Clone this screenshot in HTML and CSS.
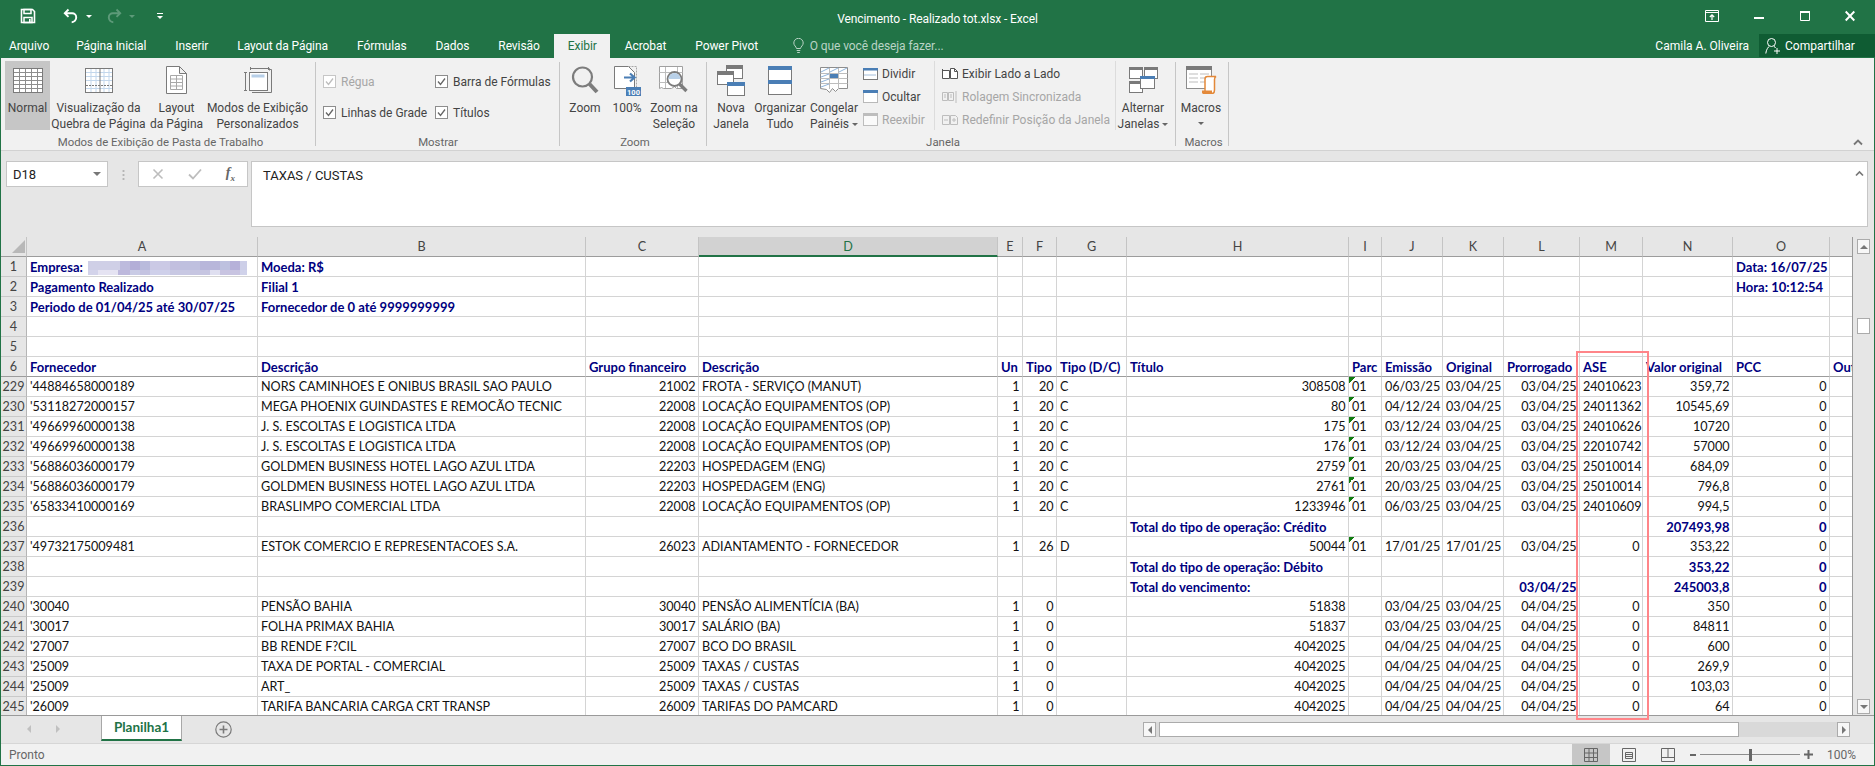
FILE: index.html
```html
<!DOCTYPE html>
<html lang="pt-BR">
<head>
<meta charset="utf-8">
<title>Vencimento - Realizado tot.xlsx - Excel</title>
<link rel="stylesheet" href="styles.css">
</head>
<body>
<div class="app">

  <header class="titlebar">
    <div class="qat">
      <svg class="q-save" width="16" height="16" viewBox="0 0 16 16"><path d="M1.5 1.5h11l2 2v11h-13z" fill="none" stroke="#fff" stroke-width="1.6"/><path d="M4 1.5h7v4H4zM4 9.5h8v5H4z" fill="none" stroke="#fff" stroke-width="1.5"/><rect x="9" y="11" width="1.6" height="3" fill="#fff"/></svg>
      <svg class="q-undo" width="16" height="16" viewBox="0 0 16 16"><path d="M5.5 1.5 1.8 5.2l3.7 3.7M2.2 5.2h7a4 4 0 0 1 4 4 4.600 4.600 0 0 1-4.500 5" fill="none" stroke="#fff" stroke-width="1.9"/></svg>
      <span class="q-caret"></span>
      <svg class="q-redo" width="16" height="16" viewBox="0 0 16 16"><path d="M10.500 1.500l3.700 3.700-3.700 3.700M13.800 5.200h-7a4 4 0 0 0-4 4 4.600 4.600 0 0 0 4.500 5" fill="none" stroke="#5d9a79" stroke-width="1.900"/></svg>
      <span class="q-caret dim"></span>
      <span class="q-custom"></span>
    </div>
    <div class="doc-title">Vencimento - Realizado tot.xlsx - Excel</div>
    <div class="winctl">
      <svg width="14" height="12" viewBox="0 0 14 12"><path d="M.5.500h13v11H.5zM.5 2.500h13" fill="none" stroke="#fff"/><path d="M7 10V5M4.800 7 7 4.800 9.200 7" fill="none" stroke="#fff" stroke-width="1.200"/></svg>
      <svg width="10" height="12" viewBox="0 0 10 12"><rect y="7" width="10" height="2" fill="#fff"/></svg>
      <svg width="10" height="12" viewBox="0 0 10 12"><path d="M.5 1.500h9v9h-9z" fill="none" stroke="#fff"/><rect y="1" width="10" height="2" fill="#fff"/></svg>
      <svg width="10" height="12" viewBox="0 0 10 12"><path d="M.7 1.500l8.600 9M9.300 1.500l-8.600 9" stroke="#fff" stroke-width="1.900"/></svg>
    </div>
  </header>

  <nav class="tabs">
    <span class="tab first">Arquivo</span>
    <span class="tab">Página Inicial</span>
    <span class="tab">Inserir</span>
    <span class="tab">Layout da Página</span>
    <span class="tab">Fórmulas</span>
    <span class="tab">Dados</span>
    <span class="tab">Revisão</span>
    <span class="tab active">Exibir</span>
    <span class="tab">Acrobat</span>
    <span class="tab">Power Pivot</span>
    <span class="tell">
      <svg width="11" height="16" viewBox="0 0 11 16"><path d="M3.500 10.500C3.200 8.500.8 7.500.8 5a4.700 4.700 0 0 1 9.400 0c0 2.500-2.400 3.500-2.700 5.500zM3.700 12.500h3.600M4.200 14.500h2.600" fill="none" stroke="#b9d3c5"/></svg>
      O que você deseja fazer...
    </span>
    <span class="user">Camila A. Oliveira</span>
    <span class="share">
      <svg width="16" height="18" viewBox="0 0 16 18"><circle cx="6.500" cy="5.500" r="4" fill="none" stroke="#fff"/><path d="M.8 16.500c.4-4 2.400-6.500 3.700-7.500M8.800 9c.7.500 1.300 1.200 1.700 2M12 11v6M9 14h6" fill="none" stroke="#fff"/></svg>
      Compartilhar
    </span>
  </nav>

  <section class="ribbon">
    <div class="group g-views">
      <div class="g-body">
        <div class="big selected w-normal">
          <div class="ico"><svg width="30" height="25" viewBox="0 0 30 25"><rect x=".5" y=".5" width="29" height="24" fill="#fff" stroke="#7a7a7a"/><path d="M6.500 1v23M12.500 1v23M18.500 1v23M24.500 1v23M1 4.500h28M1 8.500h28M1 12.500h28M1 16.500h28M1 20.500h28" stroke="#8d8d8d"/></svg></div>
          <div class="lbl">Normal</div>
        </div>
        <div class="big w-quebra">
          <div class="ico"><svg width="28" height="25" viewBox="0 0 28 25"><rect x=".5" y=".5" width="27" height="24" fill="#fff" stroke="#7a7a7a"/><path d="M6 1v23M11 1v23M19 1v23M24 1v23M1 4.500h26M1 8.500h26M1 12.500h26M1 20.500h26" stroke="#c3d7ec"/><path d="M15 1v23" stroke="#7a7a7a"/><path d="M1 17.500h26" stroke="#7a7a7a" stroke-dasharray="2 1"/></svg></div>
          <div class="lbl">Visualização da<br>Quebra de Página</div>
        </div>
        <div class="big w-layout">
          <div class="ico"><svg width="21" height="28" viewBox="0 0 21 28"><path d="M.5.500h13l7 7v20H.500zM13.500.500v7h7" fill="#fff" stroke="#7a7a7a"/><path d="M4.500 9.500h12v14h-12zM4.500 13h12M4.500 16.500h12M4.500 20h12M10.500 10v13" fill="none" stroke="#a8a8a8"/></svg></div>
          <div class="lbl">Layout<br>da Página</div>
        </div>
        <div class="big w-modos">
          <div class="ico"><svg width="28" height="26" viewBox="0 0 28 26"><path d="M6.500 1.500h19v2M1.500 5.500v18M0 5.500h3M0 23.500h3M6.500 0v3M24.500 0v3M8 25.500h19.500V2.500H25" fill="none" stroke="#7a7a7a"/><rect x="5.500" y="5.500" width="18" height="18" fill="#fff" stroke="#7a7a7a"/><rect x="7.500" y="7.500" width="13" height="3" fill="#b7cfe8"/></svg></div>
          <div class="lbl">Modos de Exibição<br>Personalizados</div>
        </div>
      </div>
      <div class="g-label">Modos de Exibição de Pasta de Trabalho</div>
    </div>

    <div class="group g-show">
      <div class="g-body checks">
        <label class="chk off"><span class="box"><svg width="13" height="13" viewBox="0 0 13 13"><path d="M3 6.500 5.500 9.500 10 3.500" fill="none" stroke="#bdbdbd" stroke-width="1.300"/></svg></span>Régua</label>
        <label class="chk"><span class="box"><svg width="13" height="13" viewBox="0 0 13 13"><path d="M3 6.500 5.500 9.500 10 3.500" fill="none" stroke="#666" stroke-width="1.300"/></svg></span>Barra de Fórmulas</label>
        <label class="chk"><span class="box"><svg width="13" height="13" viewBox="0 0 13 13"><path d="M3 6.500 5.500 9.500 10 3.500" fill="none" stroke="#666" stroke-width="1.300"/></svg></span>Linhas de Grade</label>
        <label class="chk"><span class="box"><svg width="13" height="13" viewBox="0 0 13 13"><path d="M3 6.500 5.500 9.500 10 3.500" fill="none" stroke="#666" stroke-width="1.300"/></svg></span>Títulos</label>
      </div>
      <div class="g-label">Mostrar</div>
    </div>

    <div class="group g-zoom">
      <div class="g-body">
        <div class="big w-zoom">
          <div class="ico"><svg width="28" height="28" viewBox="0 0 28 28"><circle cx="11.500" cy="11" r="9.500" fill="none" stroke="#7c7c7c" stroke-width="2.200"/><path d="M18.500 18l7.500 8" stroke="#7c7c7c" stroke-width="4"/></svg></div>
          <div class="lbl">Zoom</div>
        </div>
        <div class="big w-100">
          <div class="ico"><svg width="27" height="31" viewBox="0 0 27 31"><path d="M.5 1.500h14l6 6v16H.5z" fill="#fff" stroke="#7a7a7a"/><path d="M14.500 1.500h8v22" fill="none" stroke="#a8a8a8" stroke-dasharray="2 1"/><path d="M10 12.500h10M16 8.500l4.500 4-4.500 4" fill="none" stroke="#4a7eb5" stroke-width="2.200"/><rect x="12" y="22" width="15" height="9" fill="#4a7eb5"/><text x="19.500" y="29.500" class="hundred">100</text></svg></div>
          <div class="lbl">100%</div>
        </div>
        <div class="big w-sel">
          <div class="ico"><svg width="30" height="28" viewBox="0 0 30 28"><path d="M.5.500h23v22h-6l-2-2-3 2h-8l-2-1-2 1z" fill="#fff" stroke="#a0a0a0"/><path d="M.5 6.500h23M.5 16.500h23M6.500 1v21M18.500 1v21" stroke="#bdbdbd"/><circle cx="15.500" cy="13" r="7" fill="#fff" stroke="#7c7c7c" stroke-width="1.800"/><path d="M9.500 13a6 6 0 0 1 12 0z" fill="#b8d0e8"/><path d="M20.500 18l7 7" stroke="#7c7c7c" stroke-width="3.400"/></svg></div>
          <div class="lbl">Zoom na<br>Seleção</div>
        </div>
      </div>
      <div class="g-label">Zoom</div>
    </div>

    <div class="group g-win">
      <div class="g-body">
        <div class="big w-nova">
          <div class="ico"><svg width="28" height="31" viewBox="0 0 28 31"><rect x="9.500" y=".5" width="16" height="13" fill="#fff" stroke="#7a7a7a"/><rect x="9" width="17" height="4" fill="#7a7a7a"/><rect x=".5" y="6.500" width="16" height="13" fill="#fff" stroke="#7a7a7a"/><rect y="6" width="17" height="4" fill="#7a7a7a"/><rect x="10.500" y="17.500" width="17" height="13" fill="#fff" stroke="#7a7a7a"/><rect x="10" y="17" width="18" height="4" fill="#4a7eb5"/></svg></div>
          <div class="lbl">Nova<br>Janela</div>
        </div>
        <div class="big w-org">
          <div class="ico"><svg width="24" height="29" viewBox="0 0 24 29"><rect x=".5" y=".5" width="23" height="28" fill="#fff" stroke="#7a7a7a"/><rect width="24" height="4" fill="#4a7eb5"/><rect y="14" width="24" height="4" fill="#4a7eb5"/></svg></div>
          <div class="lbl">Organizar<br>Tudo</div>
        </div>
        <div class="big w-cong">
          <div class="ico"><svg width="28" height="27" viewBox="0 0 28 27"><path d="M.5.500h27v21h-9l-3 3-3-3-3 4-3-3-6-1z" fill="#fff" stroke="#8d8d8d"/><path d="M.5 6.500h27M.5 11.500h27M.5 16.500h27M9.500 1v21M18.500 1v21" stroke="#bdbdbd"/><path d="M1 5 9 1M10 5l8-4M1 10l8-3M1 15l8-3M1 20l8-3M19 5l8-4" stroke="#8fb4da"/><rect x="10" y="7" width="8" height="4" fill="#4a7eb5"/></svg></div>
          <div class="lbl">Congelar<br>Painéis<i class="caret"></i></div>
        </div>
        <div class="smalls w-s1">
          <div class="sm"><svg width="15" height="12" viewBox="0 0 15 12"><rect x=".5" y=".5" width="14" height="11" fill="#fff" stroke="#7a7a7a"/><rect width="15" height="2.500" fill="#4a7eb5"/><path d="M1.500 7h12" stroke="#4a7eb5" stroke-dasharray="1 1"/></svg>Dividir</div>
          <div class="sm"><svg width="15" height="13" viewBox="0 0 15 13"><rect x=".5" y=".5" width="14" height="12" fill="#fff" stroke="#7a7a7a" stroke-dasharray="1 1"/><rect width="15" height="3" fill="#4a7eb5"/></svg>Ocultar</div>
          <div class="sm off"><svg width="15" height="13" viewBox="0 0 15 13"><rect x=".5" y=".5" width="14" height="12" fill="#fafafa" stroke="#bdbdbd"/><rect width="15" height="3" fill="#bdbdbd"/></svg>Reexibir</div>
        </div>
        <div class="smalls w-s2">
          <div class="sm"><svg width="16" height="11" viewBox="0 0 16 11"><path d="M.5 2.500h7v8h-7zM8.500 10.500h7v-7l-3-3h-4z" fill="#fff" stroke="#555"/><path d="M.5 1v2M12.500.5v3h3" fill="none" stroke="#555"/></svg>Exibir Lado a Lado</div>
          <div class="sm off"><svg width="16" height="14" viewBox="0 0 16 14"><path d="M.5 2.500h5v8h-5zM6.500 10.500h5v-8h-5z" fill="none" stroke="#bdbdbd"/><path d="M2 5h2M2 7h2M8 5h2M8 7h2M14 1v12" stroke="#bdbdbd"/></svg>Rolagem Sincronizada</div>
          <div class="sm off"><svg width="16" height="11" viewBox="0 0 16 11"><path d="M.5 1.500h7v9h-7zM8.500 10.500h7v-7l-2-2h-5z" fill="none" stroke="#bdbdbd"/><path d="M2 6h4M10 6h4M12 4v4" stroke="#bdbdbd"/></svg>Redefinir Posição da Janela</div>
        </div>
        <div class="big w-alt">
          <div class="ico"><svg width="29" height="26" viewBox="0 0 29 26"><rect x=".5" y=".5" width="13" height="11" fill="#fff" stroke="#7a7a7a"/><rect width="14" height="3" fill="#7a7a7a"/><rect x="15.500" y=".5" width="13" height="11" fill="#fff" stroke="#7a7a7a"/><rect x="15" width="14" height="3" fill="#7a7a7a"/><rect x=".5" y="14.500" width="13" height="11" fill="#fff" stroke="#7a7a7a"/><rect y="14" width="14" height="3" fill="#7a7a7a"/><rect x="11.500" y="9.500" width="14" height="12" fill="#fff" stroke="#7a7a7a"/><rect x="11" y="9" width="15" height="3" fill="#4a7eb5"/></svg></div>
          <div class="lbl">Alternar<br>Janelas<i class="caret"></i></div>
        </div>
      </div>
      <div class="g-label">Janela</div>
    </div>

    <div class="group g-mac">
      <div class="g-body">
        <div class="big w-mac">
          <div class="ico"><svg width="31" height="28" viewBox="0 0 31 28"><rect x=".5" y=".5" width="25" height="22" fill="#fff" stroke="#8d8d8d"/><rect width="26" height="4" fill="#7a7a7a"/><path d="M3 8h9M14 8h9M3 12h9M14 12h6M3 16h9M14 16h5" stroke="#bdbdbd"/><path d="M19 25V13c0-1.500 1-2.500 2.500-2.500H30c-1 .5-1.500 1.500-1.500 3V24c0 2-1 3.500-2.500 3.500h-9c1.500 0 2-1.500 2-2.500z" fill="#fff" stroke="#e3893a" stroke-width="1.500"/><path d="M16 26h10" stroke="#e3893a" stroke-width="3"/></svg></div>
          <div class="lbl">Macros<br><i class="caret solo"></i></div>
        </div>
      </div>
      <div class="g-label">Macros</div>
    </div>
    <svg class="collapse" width="10" height="8" viewBox="0 0 10 8"><path d="M1 6.500 5 2.500l4 4" fill="none" stroke="#777" stroke-width="1.800"/></svg>
  </section>

  <section class="formula">
    <div class="namebox">D18<i class="caret grey"></i></div>
    <div class="grip"></div>
    <div class="fbtns">
      <svg width="12" height="12" viewBox="0 0 12 12"><path d="M1.500 1.500l9 9M10.500 1.500l-9 9" stroke="#bdbdbd" stroke-width="1.600"/></svg>
      <svg width="14" height="12" viewBox="0 0 14 12"><path d="M1 6.500l4 4 8-9" fill="none" stroke="#bdbdbd" stroke-width="1.800"/></svg>
      <span class="fx">f<sub>x</sub></span>
    </div>
    <div class="fbar">TAXAS / CUSTAS
      <svg class="fb-up" width="9" height="7" viewBox="0 0 9 7"><path d="M1 5.500l3.500-3.500L8 5.500" fill="none" stroke="#777" stroke-width="1.700"/></svg>
    </div>
  </section>

  <section class="sheet">
    <div class="gridview">
      <table class="grid">
        <colgroup>
          <col class="c-rh"><col class="c-a"><col class="c-b"><col class="c-c"><col class="c-d"><col class="c-e"><col class="c-f"><col class="c-g"><col class="c-h"><col class="c-i"><col class="c-j"><col class="c-k"><col class="c-l"><col class="c-m"><col class="c-n"><col class="c-o"><col class="c-p">
        </colgroup>
        <thead>
          <tr><th class="corner"><svg width="13" height="13" viewBox="0 0 13 13"><path d="M13 0v13H0z" fill="#b8b8b8"/></svg></th><th>A</th><th>B</th><th>C</th><th class="cur">D</th><th>E</th><th>F</th><th>G</th><th>H</th><th>I</th><th>J</th><th>K</th><th>L</th><th>M</th><th>N</th><th>O</th><th></th></tr>
        </thead>
        <tbody>
          <tr class="hd"><th>1</th><td><span>Empresa:</span><span class="blur"></span></td><td>Moeda: R$</td><td></td><td></td><td></td><td></td><td></td><td></td><td></td><td></td><td></td><td></td><td></td><td></td><td>Data: 16/07/25</td><td></td></tr>
          <tr class="hd"><th>2</th><td>Pagamento Realizado</td><td>Filial 1</td><td></td><td></td><td></td><td></td><td></td><td></td><td></td><td></td><td></td><td></td><td></td><td></td><td>Hora: 10:12:54</td><td></td></tr>
          <tr class="hd"><th>3</th><td>Periodo de 01/04/25 até 30/07/25</td><td>Fornecedor de 0 até 9999999999</td><td></td><td></td><td></td><td></td><td></td><td></td><td></td><td></td><td></td><td></td><td></td><td></td><td></td><td></td></tr>
          <tr><th>4</th><td></td><td></td><td></td><td></td><td></td><td></td><td></td><td></td><td></td><td></td><td></td><td></td><td></td><td></td><td></td><td></td></tr>
          <tr><th>5</th><td></td><td></td><td></td><td></td><td></td><td></td><td></td><td></td><td></td><td></td><td></td><td></td><td></td><td></td><td></td><td></td></tr>
          <tr class="hd frozen"><th>6</th><td>Fornecedor</td><td>Descrição</td><td>Grupo financeiro</td><td>Descrição</td><td>Un</td><td>Tipo</td><td>Tipo (D/C)</td><td>Título</td><td>Parc</td><td>Emissão</td><td>Original</td><td>Prorrogado</td><td>ASE</td><td>Valor original</td><td>PCC</td><td>Out</td></tr>
          <tr><th>229</th><td>'44884658000189</td><td>NORS CAMINHOES E ONIBUS BRASIL SAO PAULO</td><td class="r">21002</td><td>FROTA - SERVIÇO (MANUT)</td><td class="r">1</td><td class="r">20</td><td>C</td><td class="r">308508</td><td class="t">01</td><td class="r">06/03/25</td><td class="r">03/04/25</td><td class="r">03/04/25</td><td class="r m">24010623</td><td class="r">359,72</td><td class="r">0</td><td></td></tr>
          <tr><th>230</th><td>'53118272000157</td><td>MEGA PHOENIX GUINDASTES E REMOCÃO TECNIC</td><td class="r">22008</td><td>LOCAÇÃO EQUIPAMENTOS (OP)</td><td class="r">1</td><td class="r">20</td><td>C</td><td class="r">80</td><td class="t">01</td><td class="r">04/12/24</td><td class="r">03/04/25</td><td class="r">03/04/25</td><td class="r m">24011362</td><td class="r">10545,69</td><td class="r">0</td><td></td></tr>
          <tr><th>231</th><td>'49669960000138</td><td>J. S. ESCOLTAS E LOGISTICA LTDA</td><td class="r">22008</td><td>LOCAÇÃO EQUIPAMENTOS (OP)</td><td class="r">1</td><td class="r">20</td><td>C</td><td class="r">175</td><td class="t">01</td><td class="r">03/12/24</td><td class="r">03/04/25</td><td class="r">03/04/25</td><td class="r m">24010626</td><td class="r">10720</td><td class="r">0</td><td></td></tr>
          <tr><th>232</th><td>'49669960000138</td><td>J. S. ESCOLTAS E LOGISTICA LTDA</td><td class="r">22008</td><td>LOCAÇÃO EQUIPAMENTOS (OP)</td><td class="r">1</td><td class="r">20</td><td>C</td><td class="r">176</td><td class="t">01</td><td class="r">03/12/24</td><td class="r">03/04/25</td><td class="r">03/04/25</td><td class="r m">22010742</td><td class="r">57000</td><td class="r">0</td><td></td></tr>
          <tr><th>233</th><td>'56886036000179</td><td>GOLDMEN BUSINESS HOTEL LAGO AZUL LTDA</td><td class="r">22203</td><td>HOSPEDAGEM (ENG)</td><td class="r">1</td><td class="r">20</td><td>C</td><td class="r">2759</td><td class="t">01</td><td class="r">20/03/25</td><td class="r">03/04/25</td><td class="r">03/04/25</td><td class="r m">25010014</td><td class="r">684,09</td><td class="r">0</td><td></td></tr>
          <tr><th>234</th><td>'56886036000179</td><td>GOLDMEN BUSINESS HOTEL LAGO AZUL LTDA</td><td class="r">22203</td><td>HOSPEDAGEM (ENG)</td><td class="r">1</td><td class="r">20</td><td>C</td><td class="r">2761</td><td class="t">01</td><td class="r">20/03/25</td><td class="r">03/04/25</td><td class="r">03/04/25</td><td class="r m">25010014</td><td class="r">796,8</td><td class="r">0</td><td></td></tr>
          <tr><th>235</th><td>'65833410000169</td><td>BRASLIMPO COMERCIAL LTDA</td><td class="r">22008</td><td>LOCAÇÃO EQUIPAMENTOS (OP)</td><td class="r">1</td><td class="r">20</td><td>C</td><td class="r">1233946</td><td class="t">01</td><td class="r">06/03/25</td><td class="r">03/04/25</td><td class="r">03/04/25</td><td class="r m">24010609</td><td class="r">994,5</td><td class="r">0</td><td></td></tr>
          <tr class="hd"><th>236</th><td></td><td></td><td></td><td></td><td></td><td></td><td></td><td>Total do tipo de operação: Crédito</td><td></td><td></td><td></td><td></td><td></td><td class="r">207493,98</td><td class="r">0</td><td></td></tr>
          <tr><th>237</th><td>'49732175009481</td><td>ESTOK COMERCIO E REPRESENTACOES S.A.</td><td class="r">26023</td><td>ADIANTAMENTO - FORNECEDOR</td><td class="r">1</td><td class="r">26</td><td>D</td><td class="r">50044</td><td class="t">01</td><td class="r">17/01/25</td><td class="r">17/01/25</td><td class="r">03/04/25</td><td class="r m">0</td><td class="r">353,22</td><td class="r">0</td><td></td></tr>
          <tr class="hd"><th>238</th><td></td><td></td><td></td><td></td><td></td><td></td><td></td><td>Total do tipo de operação: Débito</td><td></td><td></td><td></td><td></td><td></td><td class="r">353,22</td><td class="r">0</td><td></td></tr>
          <tr class="hd"><th>239</th><td></td><td></td><td></td><td></td><td></td><td></td><td></td><td>Total do vencimento:</td><td></td><td></td><td></td><td class="r">03/04/25</td><td></td><td class="r">245003,8</td><td class="r">0</td><td></td></tr>
          <tr><th>240</th><td>'30040</td><td>PENSÃO BAHIA</td><td class="r">30040</td><td>PENSÃO ALIMENTÍCIA (BA)</td><td class="r">1</td><td class="r">0</td><td></td><td class="r">51838</td><td></td><td class="r">03/04/25</td><td class="r">03/04/25</td><td class="r">04/04/25</td><td class="r m">0</td><td class="r">350</td><td class="r">0</td><td></td></tr>
          <tr><th>241</th><td>'30017</td><td>FOLHA PRIMAX BAHIA</td><td class="r">30017</td><td>SALÁRIO (BA)</td><td class="r">1</td><td class="r">0</td><td></td><td class="r">51837</td><td></td><td class="r">03/04/25</td><td class="r">03/04/25</td><td class="r">04/04/25</td><td class="r m">0</td><td class="r">84811</td><td class="r">0</td><td></td></tr>
          <tr><th>242</th><td>'27007</td><td>BB RENDE F?CIL</td><td class="r">27007</td><td>BCO DO BRASIL</td><td class="r">1</td><td class="r">0</td><td></td><td class="r">4042025</td><td></td><td class="r">04/04/25</td><td class="r">04/04/25</td><td class="r">04/04/25</td><td class="r m">0</td><td class="r">600</td><td class="r">0</td><td></td></tr>
          <tr><th>243</th><td>'25009</td><td>TAXA DE PORTAL - COMERCIAL</td><td class="r">25009</td><td>TAXAS / CUSTAS</td><td class="r">1</td><td class="r">0</td><td></td><td class="r">4042025</td><td></td><td class="r">04/04/25</td><td class="r">04/04/25</td><td class="r">04/04/25</td><td class="r m">0</td><td class="r">269,9</td><td class="r">0</td><td></td></tr>
          <tr><th>244</th><td>'25009</td><td>ART_</td><td class="r">25009</td><td>TAXAS / CUSTAS</td><td class="r">1</td><td class="r">0</td><td></td><td class="r">4042025</td><td></td><td class="r">04/04/25</td><td class="r">04/04/25</td><td class="r">04/04/25</td><td class="r m">0</td><td class="r">103,03</td><td class="r">0</td><td></td></tr>
          <tr><th>245</th><td>'26009</td><td>TARIFA BANCARIA CARGA CRT TRANSP</td><td class="r">26009</td><td>TARIFAS DO PAMCARD</td><td class="r">1</td><td class="r">0</td><td></td><td class="r">4042025</td><td></td><td class="r">04/04/25</td><td class="r">04/04/25</td><td class="r">04/04/25</td><td class="r m">0</td><td class="r">64</td><td class="r">0</td><td></td></tr>
        </tbody>
      </table>
    </div>
    <div class="vscroll">
      <span class="sb-btn"><i class="tri up"></i></span>
      <span class="sb-thumb"></span>
      <span class="sb-btn down"><i class="tri dn"></i></span>
    </div>
    <div class="redbox"></div>
  </section>

  <section class="tabstrip">
    <div class="sheetnav"><i class="tri lf pale"></i><i class="tri rt pale"></i></div>
    <div class="sheettab">Planilha1</div>
    <svg class="addsheet" width="17" height="17" viewBox="0 0 17 17"><circle cx="8.500" cy="8.500" r="7.700" fill="none" stroke="#7a7a7a" stroke-width="1.200"/><path d="M8.500 4.500v8M4.500 8.500h8" stroke="#7a7a7a" stroke-width="1.600"/></svg>
    <div class="hscroll">
      <span class="sb-btn"><i class="tri lf"></i></span>
      <span class="h-thumb"></span>
      <span class="sb-btn"><i class="tri rt"></i></span>
    </div>
  </section>

  <footer class="status">
    <span class="ready">Pronto</span>
    <div class="views">
      <span class="vbtn on"><svg width="14" height="14" viewBox="0 0 14 14"><path d="M.5.500h13v13H.5zM5 1v12M9.500 1v12M1 5h12M1 9.500h12" fill="none" stroke="#666"/></svg></span>
      <span class="vbtn"><svg width="14" height="14" viewBox="0 0 14 14"><path d="M.5.500h13v13H.5zM3.500 4.500h7v6h-7zM3.500 6.500h7M3.500 8.500h7" fill="none" stroke="#666"/></svg></span>
      <span class="vbtn"><svg width="14" height="14" viewBox="0 0 14 14"><path d="M.5.500h13v13H.5zM.5 9.500h13M7 1v8" fill="none" stroke="#666"/></svg></span>
    </div>
    <div class="zoomctl">
      <i class="zminus"></i>
      <div class="slider"><i class="knob"></i></div>
      <svg width="9" height="9" viewBox="0 0 9 9"><path d="M4.500 0v9M0 4.500h9" stroke="#666" stroke-width="2"/></svg>
    </div>
    <span class="pct">100%</span>
  </footer>
</div>
</body>
</html>
```
FILE: styles.css
```css
* { box-sizing: border-box; }
html, body { margin: 0; padding: 0; }
body { width: 1875px; height: 766px; overflow: hidden; font-family: Roboto, "Open Sans", sans-serif; font-size: 12px; color: #444; }
i { font-style: normal; display: inline-block; }
svg { display: block; flex: none; }

.app { width: 1875px; height: 766px; display: flex; flex-direction: column; border-left: 1px solid #217346; border-right: 1px solid #217346; border-bottom: 1px solid #217346; background: #e6e6e6; }

/* title bar */
.titlebar { height: 34px; flex: none; background: #217346; color: #fff; display: grid; grid-template-columns: 1fr 400px 1fr; align-items: center; margin-left: -1px; margin-right: -1px; }
.qat { display: flex; align-items: center; padding-left: 20px; height: 32px; align-self: start; }
.q-undo { margin-left: 27px; }
.q-redo { margin-left: 14px; }
.q-caret { width: 0; height: 0; border: 3px solid transparent; border-top: 3px solid #fff; margin: 3px 0 0 7px; }
.q-caret.dim { border-top-color: #5d9a79; }
.q-custom { width: 6px; height: 6px; margin-left: 22px; border-top: 1px solid #fff; position: relative; }
.q-custom::after { content: ""; display: block; width: 0; height: 0; border: 3px solid transparent; border-top-color: #fff; margin-top: 2px; }
.doc-title { text-align: center; font-size: 12px; letter-spacing: -.1px; padding-top: 3px; }
.winctl { display: flex; justify-content: flex-end; align-items: center; height: 32px; padding-right: 20px; gap: 35.500px; align-self: start; }

/* tabs */
.tabs { height: 24px; flex: none; background: #217346; display: flex; align-items: stretch; color: #fff; margin-left: -1px; margin-right: -1px; letter-spacing: -.08px; }
.tab { padding: 5px 14.500px 0; }
.tab.first { padding-left: 9px; padding-right: 12.500px; }
.tab.active { background: #f1f1f1; color: #217346; padding: 5px 13.500px 0; }
.tell { display: flex; align-items: center; gap: 6px; margin-left: 20px; color: #b9d3c5; }
.user { margin-left: auto; padding: 5px 10px 0 0; letter-spacing: 0; }
.share { width: 116px; margin-bottom: 1px; background: #0f5c33; display: flex; align-items: center; padding-left: 6px; gap: 4px; letter-spacing: 0; }

/* ribbon */
.ribbon { height: 93px; flex: none; background: #f1f1f1; border-bottom: 1px solid #d2d2d2; display: flex; position: relative; padding-left: 1px; }
.group { display: flex; flex-direction: column; align-items: stretch; padding-top: 3px; position: relative; }
.group::after { content: ""; position: absolute; right: 0; top: 4px; bottom: 4px; width: 1px; background: #c6c6c6; }
.g-body { height: 73px; display: flex; }
.g-label { height: 16px; line-height: 16px; text-align: center; color: #666; font-size: 11.400px; }
.g-views { width: 314px; padding-left: 3px; }
.g-show { width: 244px; }
.g-zoom { width: 147px; padding-left: 3px; }
.g-win { width: 469px; padding-left: 3px; }
.g-mac { width: 53px; padding-left: 2px; }
.big { height: 69px; display: flex; flex-direction: column; align-items: center; }
.big.selected { background: #c6c6c6; }
.ico { height: 38px; margin-bottom: 1px; flex: none; display: flex; align-items: center; justify-content: center; }
.lbl { line-height: 16px; text-align: center; white-space: nowrap; }
.w-normal { width: 45px; }
.w-quebra { width: 97px; }
.w-layout { width: 59px; }
.w-modos { width: 103px; }
.w-zoom { width: 44px; }
.w-100 { width: 40px; }
.w-sel { width: 54px; }
.w-nova { width: 42px; }
.w-org { width: 56px; }
.w-cong { width: 52px; }
.w-alt { width: 54px; }
.w-mac { width: 46px; }
.smalls { display: flex; flex-direction: column; height: 69px; padding-top: 1px; }
.w-s1 { width: 75px; padding-left: 3px; border-right: 1px solid #dcdcdc; }
.w-s2 { width: 181px; padding-left: 7px; border-right: 1px solid #dcdcdc; }
.sm { height: 23px; flex: none; display: flex; align-items: center; gap: 4px; white-space: nowrap; }
.sm.off { color: #a6a6a6; }
.checks { display: grid; grid-template-columns: 112px 1fr; grid-auto-rows: 31px; padding: 5px 0 0 7px; }
.chk { display: flex; align-items: center; gap: 5px; white-space: nowrap; }
.chk.off { color: #a6a6a6; }
.box { width: 13px; height: 13px; background: #fff; border: 1px solid #8d8d8d; display: block; }
.chk.off .box { border-color: #c6c6c6; }
.box svg { margin: -1px; }
.hundred { font: 700 7.500px Roboto, sans-serif; fill: #fff; text-anchor: middle; }
.caret { width: 0; height: 0; border: 3px solid transparent; border-top-color: #666; margin-left: 3px; vertical-align: -1px; }
.caret.solo { margin-left: 0; vertical-align: 0; }
.collapse { position: absolute; right: 11px; top: 80px; }

/* formula row */
.formula { height: 86px; flex: none; background: #e6e6e6; display: flex; align-items: flex-start; padding-top: 10px; }
.namebox { width: 102px; height: 26px; margin-left: 5px; background: #fff; border: 1px solid #c6c6c6; display: flex; align-items: center; justify-content: space-between; padding: 0 6px; font: 13px Roboto, sans-serif; color: #222; }
.caret.grey { border-top-color: #777; border-width: 4px; margin-top: 4px; }
.grip { width: 30px; height: 12px; margin-top: 8px; background: radial-gradient(circle, #b5b5b5 1px, transparent 1.200px) center top / 3px 4px repeat-y; }
.fbtns { width: 110px; height: 26px; background: #fff; border: 1px solid #c6c6c6; display: flex; align-items: center; justify-content: space-between; padding: 0 12px 0 13px; }
.fx { font: italic 700 14px "Liberation Serif", serif; color: #666; }
.fx sub { font-size: 9px; }
.fbar { width: 1617px; margin-left: 3px; height: 66px; background: #fff; border: 1px solid #c6c6c6; padding: 4px 0 0 11px; font: 13px/20px Roboto, sans-serif; color: #222; position: relative; }
.fb-up { position: absolute; right: 3px; top: 8px; }

/* sheet */
.sheet { height: 478px; flex: none; display: flex; position: relative; }
.gridview { width: 1852px; flex: none; overflow: hidden; border-right: 1px solid #9a9a9a; height: 478px; }
.grid { border-collapse: separate; border-spacing: 0; table-layout: fixed; width: 1852px; font-family: Lato, sans-serif; font-size: 12.600px; color: #111; }
.c-rh { width: 26px; } .c-a { width: 231px; } .c-b { width: 328px; } .c-c { width: 113px; } .c-d { width: 299px; }
.c-e { width: 25px; } .c-f { width: 34px; } .c-g { width: 70px; } .c-h { width: 222px; } .c-i { width: 33px; }
.c-j { width: 61px; } .c-k { width: 61px; } .c-l { width: 76px; } .c-m { width: 63px; } .c-n { width: 90px; }
.c-o { width: 97px; } .c-p { width: 23px; }
.grid th { background: #e6e6e6; height: 20px; padding: 0; font-weight: 400; color: #444; text-align: center; border-right: 1px solid #b5b5b5; border-bottom: 1px solid #c9c9c9; }
.grid thead th { border-bottom: 1px solid #9c9c9c; border-right: 1px solid #c4c4c4; }
.grid th.corner { vertical-align: middle; }
.corner svg { margin: 0 0 0 11px; }
.grid th.cur { background: #d2d2d2; border-bottom: 2px solid #217346; color: #217346; }
.grid td { height: 20px; padding: 0 2.500px 0 3px; background: #fff; border-right: 1px solid #d4d4d4; border-bottom: 1px solid #d4d4d4; white-space: nowrap; overflow: visible; }
.grid td.r { text-align: right; }
.grid td.t { background: #fff linear-gradient(135deg, #107c10 50%, transparent 50%) 0 0 / 6px 6px no-repeat; }
.hd td { color: #000080; font-weight: 700; font-size: 13px; }
.frozen td, .frozen th { border-bottom: 1px solid #9c9c9c !important; }
.blur { display: inline-block; width: 159px; height: 14px; margin-left: 5px; vertical-align: -3px; background:
  linear-gradient(90deg, #cfcfe6 0 32px, #bdbbdd 32px 42px, #b3aed7 42px 52px, #b9bbdc 52px 62px, #cbc9e5 62px 82px, #c2bfdf 82px 92px, #bfc0df 92px 112px, #b8b6da 112px 132px, #bdc1df 132px 142px, #b6b1d9 142px 152px, #cdcfe8 152px) 0 0 / 100% 9px no-repeat,
  linear-gradient(90deg, #d3d3ea 0 10px, #e5e3f2 10px 30px, #bdb8dc 30px 42px, #c9cbe5 42px 52px, #c4c3e1 52px 62px, #cfd0ea 62px 82px, #c8c8e3 82px 102px, #c6c5e1 102px 122px, #dfdff0 122px 132px, #c8c4e1 132px 152px, #d0d2ea 152px) 0 9px / 100% 5px no-repeat; }

.vscroll { width: 21px; flex: none; background: #e6e6e6; display: flex; flex-direction: column; align-items: center; padding: 2px 0 1px; }
.sb-btn { width: 13px; height: 15px; background: #f7f7f7; border: 1px solid #ababab; display: flex; align-items: center; justify-content: center; flex: none; }
.sb-thumb { width: 13px; height: 16px; background: #fff; border: 1px solid #ababab; margin-top: 64px; }
.sb-btn.down { margin-top: auto; }
.tri { width: 0; height: 0; border: 4px solid transparent; }
.tri.up { border-bottom-color: #777; border-top-width: 0; }
.tri.dn { border-top-color: #777; border-bottom-width: 0; }
.tri.lf { border-right-color: #777; border-left-width: 0; }
.tri.rt { border-left-color: #777; border-right-width: 0; }
.tri.pale { border-left-color: #c0c0c0; border-right-color: #c0c0c0; }
.redbox { position: absolute; left: 1575px; top: 114px; width: 73px; height: 369px; border: 2px solid #ff8589; pointer-events: none; }

/* tab strip */
.tabstrip { height: 28px; flex: none; background: #e6e6e6; border-top: 1px solid #9a9a9a; display: flex; align-items: flex-start; }
.sheetnav { width: 100px; display: flex; gap: 25px; padding: 9px 0 0 26px; }
.sheettab { width: 81px; height: 25px; background: #fff; border: 1px solid #a8a8a8; border-top: 0; border-bottom: 2px solid #217346; color: #217346; font: 700 13.500px/23px Lato, sans-serif; text-align: center; }
.addsheet { margin: 5px 0 0 33px; }
.hscroll { margin-left: auto; margin-right: 24px; margin-top: 6px; height: 15px; width: 707px; display: flex; background: #d9d9d9; }
.hscroll .sb-btn { width: 13px; }
.h-thumb { width: 580px; margin: 0 auto 0 3px; background: #fff; border: 1px solid #ababab; }

/* status bar */
.status { height: 22px; flex: none; background: #f1f1f1; border-top: 1px solid #d6d6d6; display: flex; align-items: center; color: #666; }
.ready { padding-left: 8px; }
.views { margin-left: auto; display: flex; align-self: stretch; }
.vbtn { width: 38.500px; display: flex; align-items: center; justify-content: center; }
.vbtn.on { background: #c6c6c6; }
.zoomctl { display: flex; align-items: center; width: 140px; padding-left: 3px; flex: none; }
.zminus { width: 6px; height: 2px; background: #666; flex: none; }
.slider { width: 100px; height: 1px; background: #8d8d8d; margin: 0 4px; display: flex; align-items: center; justify-content: center; flex: none; }
.knob { width: 3px; height: 12px; background: #666; flex: none; }
.pct { width: 47px; flex: none; font-size: 12px; }
```
